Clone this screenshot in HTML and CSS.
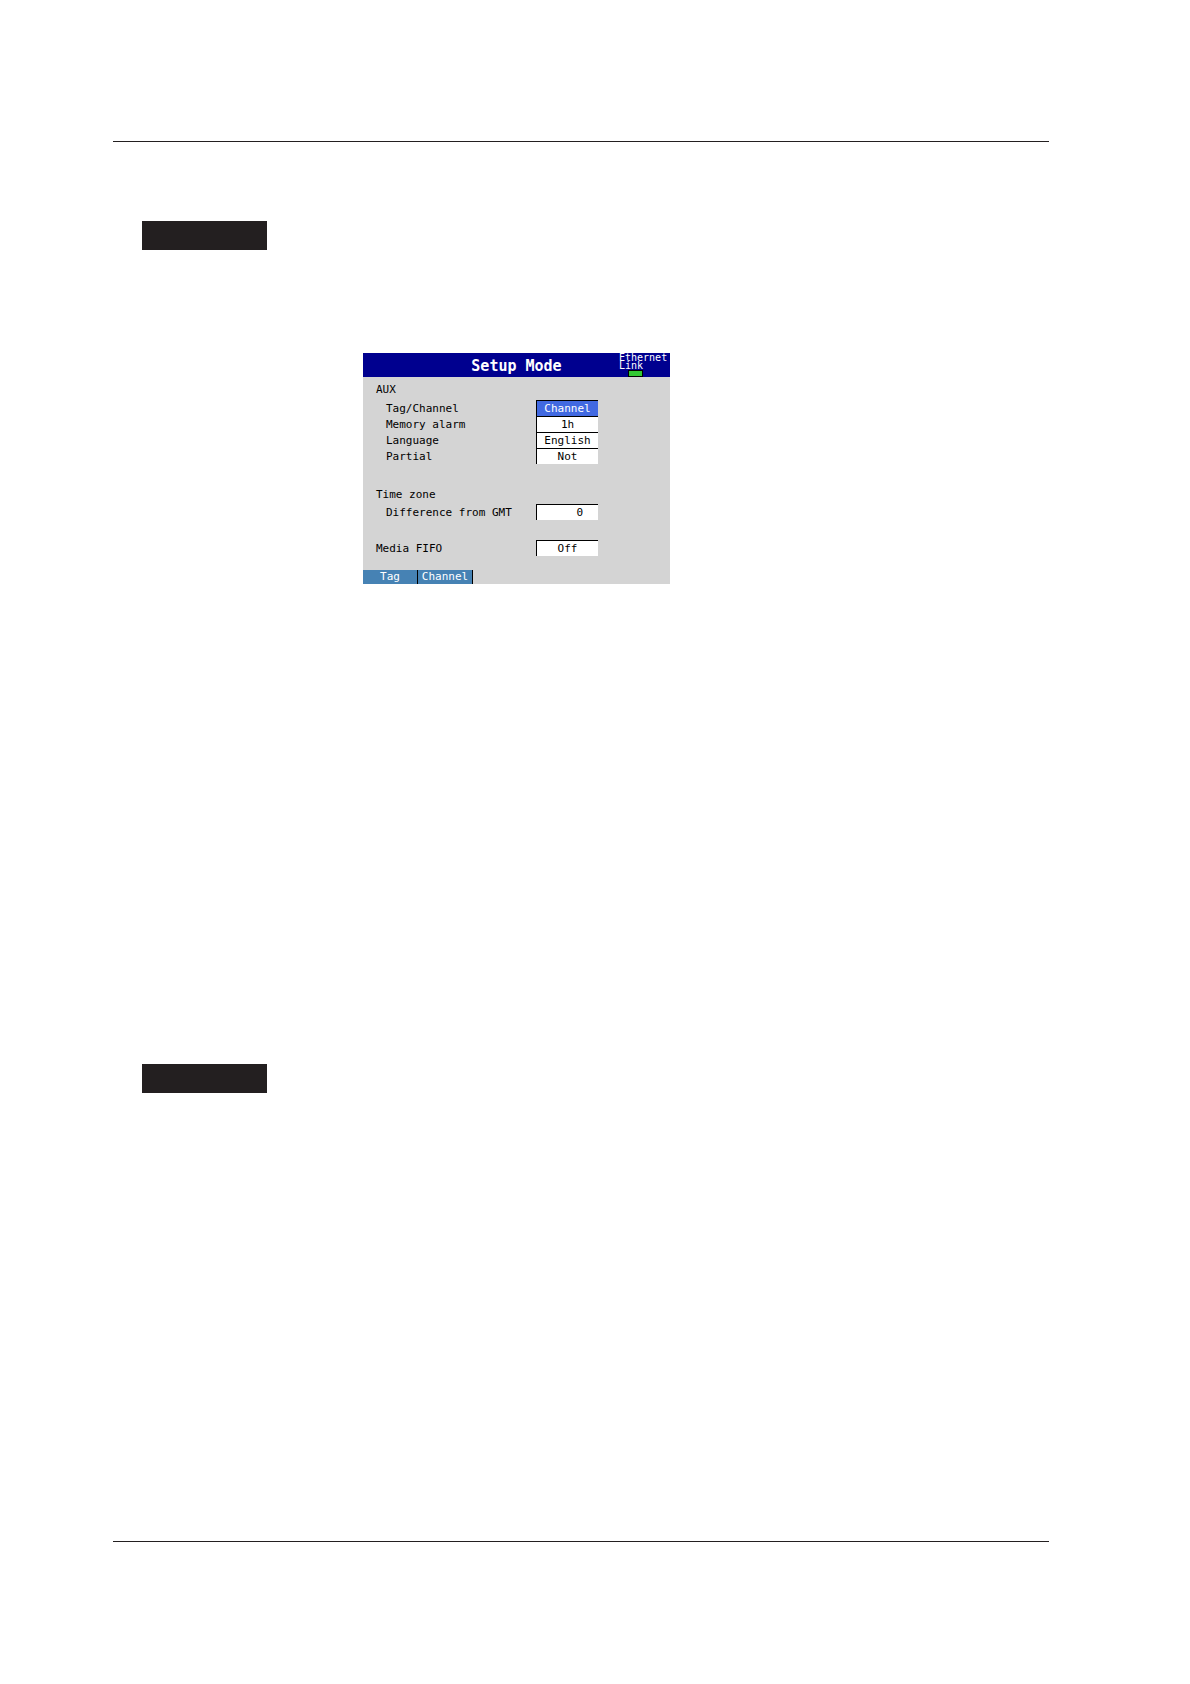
FILE: index.html
```html
<!DOCTYPE html>
<html lang="en">
<head>
    <meta charset="utf-8">
    <title>Setup Mode</title>
    <link rel="stylesheet" href="styles.css">
</head>
<body>
    <main class="page">
        <section class="topic">
            <div class="tab"></div>

            <form class="screen">
                <header class="titlebar">
                    <h1>Setup Mode</h1>
                    <div class="link-status">
                        Ethernet<br>Link
                        <span class="led"></span>
                    </div>
                </header>

                <div class="settings">
                    <fieldset class="group">
                        <legend>AUX</legend>
                        <div class="row sub">
                            <label for="tag">Tag/Channel</label>
                            <select id="tag" class="field selected"><option>Channel</option></select>
                        </div>
                        <div class="row sub">
                            <label for="alarm">Memory alarm</label>
                            <select id="alarm" class="field"><option>1h</option></select>
                        </div>
                        <div class="row sub">
                            <label for="language">Language</label>
                            <select id="language" class="field"><option>English</option></select>
                        </div>
                        <div class="row sub">
                            <label for="partial">Partial</label>
                            <select id="partial" class="field"><option>Not</option></select>
                        </div>
                    </fieldset>

                    <fieldset class="group">
                        <legend>Time zone</legend>
                        <div class="row sub">
                            <label for="gmt">Difference from GMT</label>
                            <input id="gmt" class="field number" type="text" value="0">
                        </div>
                    </fieldset>

                    <div class="row">
                        <label for="fifo">Media FIFO</label>
                        <select id="fifo" class="field"><option>Off</option></select>
                    </div>
                </div>

                <div class="softkeys">
                    <button type="button">Tag</button>
                    <button type="button">Channel</button>
                </div>
            </form>
        </section>

        <section class="topic">
            <div class="tab"></div>
        </section>
    </main>
</body>
</html>
```
FILE: styles.css
```css
* {
    box-sizing: border-box;
}

body {
    margin: 0;
    padding: 141px 141px 142px 113px;
    min-height: 100vh;
    display: flex;
    background: #fff;
}

.page {
    flex: 1;
    display: flex;
    flex-direction: column;
    gap: 480px;
    padding: 79px 29px;
    border-top: 1px solid #231f20;
    border-bottom: 1px solid #231f20;
}

.tab {
    width: 125px;
    height: 29px;
    background: #231f20;
}

.screen {
    width: 307px;
    margin: 103px 0 0 221px;
    background: #d4d4d4;
    color: #000;
    font: 11px/16px "DejaVu Sans Mono", monospace;
}

.titlebar {
    display: grid;
    grid-template-columns: 1fr auto 1fr;
    height: 24px;
    background: #00008f;
    color: #fff;
}

.titlebar h1 {
    grid-column: 2;
    margin: 0;
    font-size: 15px;
    line-height: 26px;
}

.link-status {
    justify-self: end;
    width: 51px;
    padding-top: 1px;
    font-size: 10px;
    line-height: 8px;
}

.led {
    display: block;
    width: 15px;
    height: 7px;
    margin-left: 9px;
    border: 1px solid #000;
    background: #32c832;
}

.settings {
    padding: 5px 72px 14px 13px;
}

.group {
    margin: 0 0 20px;
    padding: 0;
    border: 0;
}

.group legend {
    padding: 0;
    height: 18px;
}

.group + .group {
    margin-top: 23px;
}

.group + .group legend {
    height: 17px;
}

.row {
    display: flex;
    justify-content: space-between;
    height: 16px;
}

.row label {
    line-height: 18px;
}

.sub {
    padding-left: 10px;
}

.field {
    appearance: none;
    width: 62px;
    height: 16px;
    padding: 0;
    border: solid #000;
    border-width: 1px 0 0 1px;
    border-radius: 0;
    background: #fff;
    color: #000;
    font: inherit;
    line-height: 15px;
    text-align: center;
    text-align-last: center;
}

.selected {
    background: #4169e1;
    color: #fff;
}

.number {
    padding-right: 15px;
    text-align: right;
    text-align-last: right;
}

.softkeys {
    display: flex;
}

.softkeys button {
    width: 55px;
    height: 14px;
    padding: 0;
    border: 0;
    border-right: 1px solid #000;
    border-radius: 0;
    background: #4682b4;
    color: #fff;
    font: inherit;
    line-height: 14px;
}
```
